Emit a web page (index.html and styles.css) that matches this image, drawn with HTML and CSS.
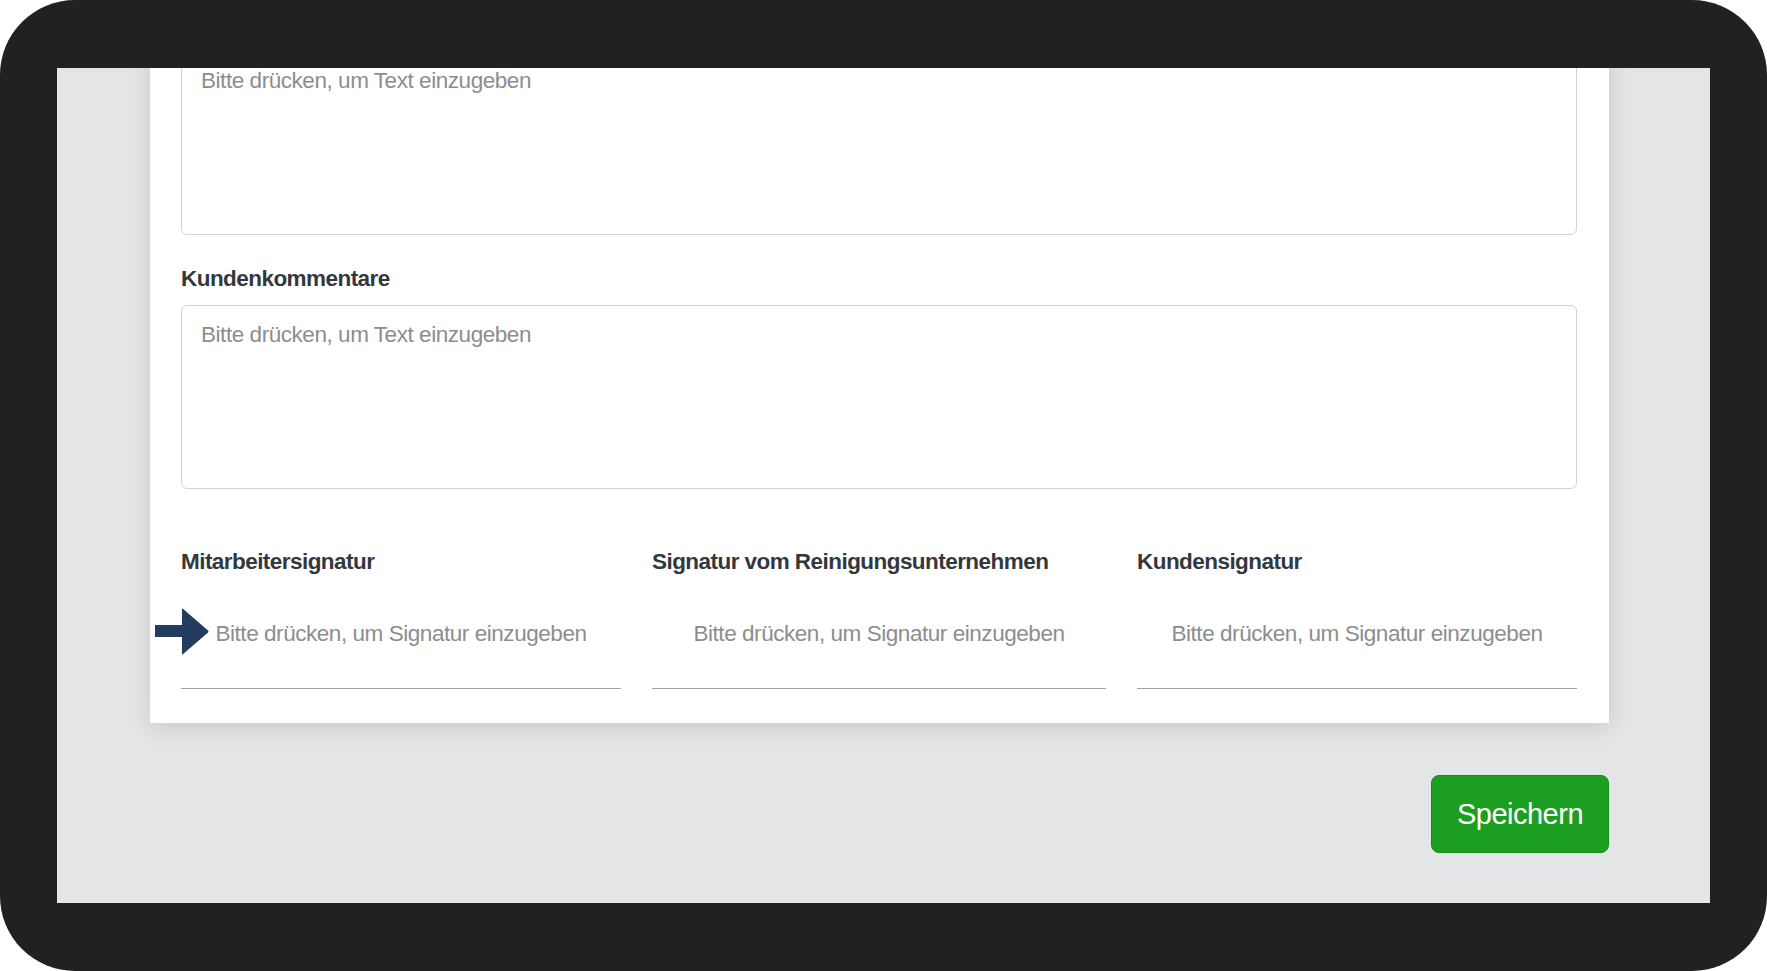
FILE: index.html
```html
<!DOCTYPE html>
<html lang="de">
<head>
    <meta charset="UTF-8">
    <meta name="viewport" content="width=device-width, initial-scale=1.0">
    <title>Reinigungsbericht</title>
    <link rel="stylesheet" href="styles.css">
</head>
<body>
    <!-- Device frame -->
    <div class="device">
        <div class="screen">
            <div class="page">

                <!-- Report card -->
                <div class="card">
                    <div class="field">
                        <textarea class="text-input" placeholder="Bitte drücken, um Text einzugeben"></textarea>
                    </div>

                    <div class="field">
                        <label class="field-label">Kundenkommentare</label>
                        <textarea class="text-input" placeholder="Bitte drücken, um Text einzugeben"></textarea>
                    </div>

                    <!-- Signatures -->
                    <div class="sig-row">
                        <div class="sig-col">
                            <div class="field-label">Mitarbeitersignatur</div>
                            <div class="sig-pad">
                                <svg class="sig-arrow" width="54" height="47" viewBox="0 0 54 47">
                                    <rect x="0" y="17" width="30" height="12" fill="#243b60"/>
                                    <path d="M27 1.5 Q27 0 28.2 1 L53 22.5 Q54 23.5 53 24.5 L28.2 46 Q27 47 27 45.5 Z" fill="#243b60"/>
                                </svg>
                                <span class="sig-hint">Bitte drücken, um Signatur einzugeben</span>
                            </div>
                        </div>
                        <div class="sig-col">
                            <div class="field-label">Signatur vom Reinigungsunternehmen</div>
                            <div class="sig-pad">
                                <span class="sig-hint">Bitte drücken, um Signatur einzugeben</span>
                            </div>
                        </div>
                        <div class="sig-col">
                            <div class="field-label">Kundensignatur</div>
                            <div class="sig-pad">
                                <span class="sig-hint">Bitte drücken, um Signatur einzugeben</span>
                            </div>
                        </div>
                    </div>
                </div>

                <div class="actions">
                    <button type="button" class="save-btn">Speichern</button>
                </div>

            </div>
        </div>
    </div>
</body>
</html>
```

FILE: styles.css
```css
* {
    margin: 0;
    padding: 0;
    box-sizing: border-box;
}

html, body {
    width: 100%;
    height: 100%;
    overflow: hidden;
    background: #fff;
    font-family: 'Liberation Sans', Arial, Helvetica, sans-serif;
}

/* Device Frame */
.device {
    height: 971px;
    background: #222021;
    border-radius: 75px;
    padding: 68px 57px 68px 57px;
}

.screen {
    height: 100%;
    background: #e4e5e7;
    overflow: hidden;
}

.page {
    margin-top: -48px;
    padding: 0 101px 0 93px;
}

/* Card */
.card {
    background: #fff;
    padding: 31px 32px 34px 31px;
    box-shadow: 0 4px 22px rgba(0, 0, 0, 0.13);
}

.field {
    margin-bottom: 31px;
}

.field-label {
    display: block;
    font-size: 22.5px;
    line-height: 26px;
    font-weight: bold;
    letter-spacing: -0.55px;
    color: #33383d;
    margin-bottom: 13px;
}

.text-input {
    display: block;
    width: 100%;
    height: 184px;
    padding: 13px 19px;
    font-family: 'Liberation Sans', Arial, Helvetica, sans-serif;
    font-size: 22.5px;
    line-height: 32px;
    letter-spacing: -0.45px;
    color: #333;
    background: #fff;
    border: 1px solid #d3d3d3;
    border-radius: 6px;
    resize: none;
    outline: none;
}

.text-input::placeholder {
    color: #8d8d8d;
}

/* Signatures */
.sig-row {
    display: grid;
    grid-template-columns: 440px 454px 1fr;
    gap: 31px;
    margin-top: 60px;
}

.sig-col .field-label {
    margin-bottom: 0;
}

.sig-pad {
    position: relative;
    padding: 43px 0 38px;
    border-bottom: 1px solid #a3a3a3;
    text-align: center;
    cursor: pointer;
}

.sig-hint {
    font-size: 22.5px;
    line-height: 32px;
    letter-spacing: -0.45px;
    color: #8d8d8d;
}

.sig-arrow {
    position: absolute;
    left: -26px;
    top: 33px;
}

/* Save Button */
.actions {
    display: flex;
    justify-content: flex-end;
    margin-top: 52px;
}

.save-btn {
    width: 178px;
    height: 78px;
    font-family: 'Liberation Sans', Arial, Helvetica, sans-serif;
    font-size: 29px;
    letter-spacing: -0.5px;
    color: #fff;
    background: #1c9f21;
    border: 1px solid #168a1b;
    border-radius: 8px;
    cursor: pointer;
}
```
